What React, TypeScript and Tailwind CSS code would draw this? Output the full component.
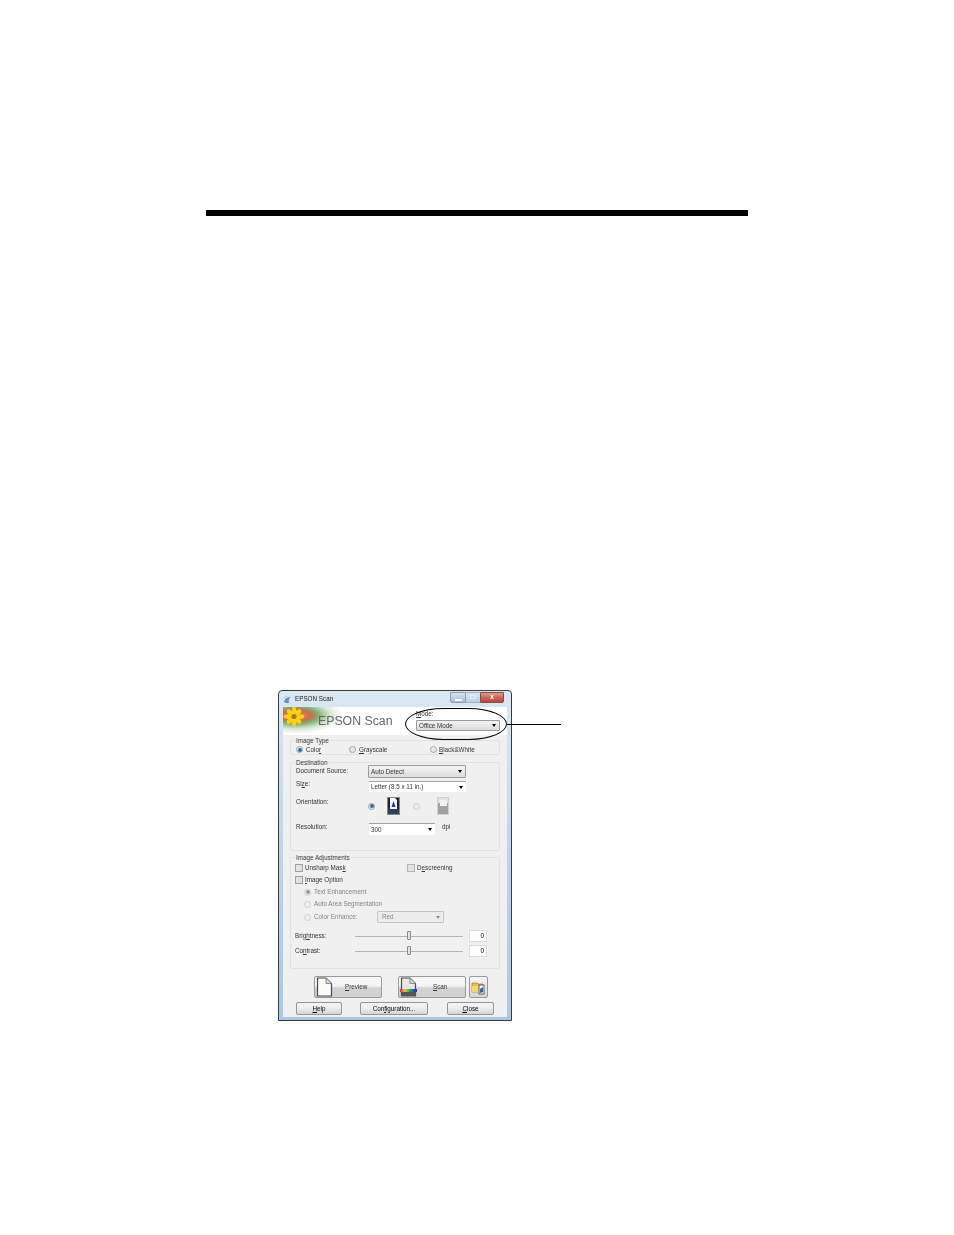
import type { ReactNode } from 'react';

function Radio({ on, off }: { on?: boolean; off?: boolean }) {
  return (
    <span className={`flex h-[7px] w-[7px] shrink-0 items-center justify-center rounded-full border ${off ? 'border-[#cfcfcf] bg-[#eeeeee]' : 'border-[#a0a4aa] bg-[#e8e8e8]'}`}>
      {on && <span className={`h-[4px] w-[4px] rounded-full ${off ? 'bg-[#9a9a9a]' : 'bg-[#2f6f9f]'}`} />}
    </span>
  );
}

function Check({ off }: { off?: boolean }) {
  return <span className={`h-[8px] w-[8px] shrink-0 border bg-[#e2e2e2] ${off ? 'border-[#b4b4b4]' : 'border-[#a0a0a0]'}`} />;
}

function Caret({ light }: { light?: boolean }) {
  return <span className={`h-0 w-0 border-x-[2.5px] border-t-[3px] border-x-transparent ${light ? 'border-t-[#8a8a8a]' : 'border-t-black'}`} />;
}

function Dropdown({ text, className, plain, off }: { text: string; className: string; plain?: boolean; off?: boolean }) {
  return (
    <div className={`flex shrink-0 items-center justify-between pl-[2px] pr-[3px] ${plain ? 'border-t border-t-[#a4a4a4] bg-white' : off ? 'rounded-[1px] border border-[#c4c4c4] bg-[#ececec] text-[#8a8a8a]' : 'rounded-[1px] border border-[#9a9a9a] bg-gradient-to-b from-[#f4f4f4] to-[#dcdcdc]'} ${className}`}>
      <span>{text}</span>
      <Caret light={off} />
    </div>
  );
}

function Group({ title, className, children }: { title: string; className: string; children?: ReactNode }) {
  return (
    <div className={`relative ml-[7px] w-[210px] rounded-[2px] border border-[#e0e2e4] ${className}`}>
      <span className="absolute -top-[4px] left-[4px] bg-[#f0f0f0] px-[1px] leading-[8px] text-[#3a3a3a]">{title}</span>
      {children}
    </div>
  );
}

function Slider({ label }: { label: ReactNode }) {
  return (
    <div className="flex h-[12px] items-center pl-[4px]">
      <span className="w-[60px] shrink-0">{label}</span>
      <div className="relative flex h-[12px] w-[108px] items-center">
        <div className="h-px w-full bg-[#b4b4b4]" />
        <div className="absolute left-[52px] top-[1px] h-[9px] w-[4px] rounded-[1px] border border-[#888] bg-[#e4e4e4]" />
      </div>
      <div className="ml-[6px] flex h-[12px] w-[18px] items-center justify-end border border-[#dcdcdc] bg-white pr-[2px] text-black">0</div>
    </div>
  );
}

function PageIcon({ rainbow }: { rainbow?: boolean }) {
  return (
    <svg width="17" height="20" viewBox="0 0 17 20" className="shrink-0">
      <defs>
        <linearGradient id="rb" x1="0" x2="1" y1="0" y2="0">
          <stop offset="0" stopColor="#e01890" />
          <stop offset="0.3" stopColor="#e8d020" />
          <stop offset="0.55" stopColor="#30b040" />
          <stop offset="0.8" stopColor="#2050c8" />
          <stop offset="1" stopColor="#602090" />
        </linearGradient>
      </defs>
      <path d="M1.5 1 H10 L15.5 6.5 V19 H1.5 Z" fill={rainbow ? '#e6e6e6' : '#fbfbf8'} stroke="#4a4a4a" strokeWidth="1.2" />
      <path d="M10 1 V6.5 H15.5" fill="#d8d8d8" stroke="#777" strokeWidth="0.8" />
      {rainbow && <rect x="0" y="12" width="17" height="3" fill="url(#rb)" />}
      {rainbow && <rect x="1.5" y="15" width="14" height="4" fill="#555" />}
    </svg>
  );
}

function BigButton({ children, w }: { children: ReactNode; w: string }) {
  return (
    <div className={`flex h-[22px] items-center rounded-[2px] border border-[#9a9a9a] bg-gradient-to-b from-[#f6f6f6] from-45% to-[#d2d2d2] to-55% pl-[1px] ${w}`}>
      {children}
    </div>
  );
}

function SmallButton({ children, w }: { children: ReactNode; w: string }) {
  return (
    <div className={`flex h-[13px] items-center justify-center rounded-[2px] border border-[#949494] bg-gradient-to-b from-[#f6f6f6] via-[#ececec] to-[#d6d6d6] text-black ${w}`}>
      {children}
    </div>
  );
}

export default function App() {
  return (
    <div className="min-h-[1235px] bg-white pt-[210px] font-['Liberation_Sans',sans-serif]">
      <div className="ml-[206px] h-[6px] w-[542px] bg-black" />

      <div className="relative ml-[278px] mt-[474px] w-[234px]">
        <div className="h-[331px] w-[234px] rounded-t-[4px] border border-[#3a3a3a] bg-gradient-to-b from-[#dbe8f4] via-[#bcd4ec] to-[#a9c8e8] px-[4px] pb-[4px] text-[6.3px] leading-[8px] text-[#333] blur-[0.35px]">
          {/* title bar */}
          <div className="flex h-[16px] items-center">
            <svg width="9" height="9" viewBox="0 0 9 9" className="shrink-0">
              <path d="M1 7 C2 3 5 2 8 2 C6 3 5 5 6 8 C4 8 2 8 1 7 Z" fill="#5d8fc4" />
              <path d="M1 3 C2 2 3 1 4 1" stroke="#9fb9d4" fill="none" />
            </svg>
            <span className="ml-[3px] text-[#222]">EPSON Scan</span>
            <div className="ml-auto mr-[3px] flex h-[11px] -translate-y-[2px]">
              <div className="flex w-[16px] items-end justify-center rounded-bl-[2px] border border-[#8d9cae] bg-gradient-to-b from-[#d8e4f0] to-[#a8bcd2] pb-[1px]">
                <span className="h-[2px] w-[7px] bg-white" />
              </div>
              <div className="flex w-[14px] items-center justify-center border-y border-[#a0b0c2] bg-gradient-to-b from-[#dae6f2] to-[#bccfe2]">
                <span className="h-[4px] w-[6px] border border-[#e8eef5]" />
              </div>
              <div className="flex w-[24px] items-center justify-center rounded-br-[2px] border border-[#8a4a42] bg-gradient-to-b from-[#dba094] via-[#c7665a] to-[#b84a3e] text-[7px] font-bold text-white">
                x
              </div>
            </div>
          </div>

          {/* client area */}
          <div className="h-[310px] w-[224px] bg-[#f0f0f0]">
            {/* banner */}
            <div className="flex h-[28px] items-start bg-white">
              <svg width="72" height="28" viewBox="0 0 72 28" className="shrink-0">
                <defs>
                  <radialGradient id="halo" cx="0.18" cy="0.3" r="0.8">
                    <stop offset="0" stopColor="#c8a030" />
                    <stop offset="0.26" stopColor="#cf6a52" />
                    <stop offset="0.38" stopColor="#7fb070" />
                    <stop offset="0.6" stopColor="#dbe7d6" />
                    <stop offset="0.82" stopColor="#ffffff" />
                  </radialGradient>
                </defs>
                <rect width="72" height="28" fill="url(#halo)" />
                <g fill="#f6d21a">
                  <ellipse cx="11" cy="4" rx="2.3" ry="4.4" />
                  <ellipse cx="11" cy="15" rx="2.3" ry="4.4" />
                  <ellipse cx="5" cy="9.5" rx="4.4" ry="2.3" />
                  <ellipse cx="17" cy="9.5" rx="4.4" ry="2.3" />
                  <ellipse cx="7" cy="5.5" rx="2.3" ry="4" transform="rotate(-45 7 5.5)" />
                  <ellipse cx="15" cy="5.5" rx="2.3" ry="4" transform="rotate(45 15 5.5)" />
                  <ellipse cx="7" cy="13.5" rx="2.3" ry="4" transform="rotate(45 7 13.5)" />
                  <ellipse cx="15" cy="13.5" rx="2.3" ry="4" transform="rotate(-45 15 13.5)" />
                </g>
                <circle cx="11" cy="9.5" r="2.6" fill="#b8741c" />
              </svg>
              <span className="mt-[7px] -ml-[37px] text-[12.3px] leading-[14px] text-[#666]">EPSON Scan</span>
              <div className="ml-auto mr-[7px] mt-[3px] w-[84px]">
                <div className="h-[10px] leading-[8px]"><u>M</u>ode:</div>
                <Dropdown text="Office Mode" className="h-[11px] w-[84px]" />
              </div>
            </div>

            <Group title="Image Type" className="mt-[5px] h-[15px]">
              <div className="flex h-[14px] items-center pl-[5px] pt-[3px]">
                <div className="flex w-[53px] items-center gap-[3px]"><Radio on /><span>Colo<u>r</u></span></div>
                <div className="flex w-[81px] items-center gap-[3px]"><Radio /><span><u>G</u>rayscale</span></div>
                <div className="flex items-center gap-[2px]"><Radio /><span><u>B</u>lack&amp;White</span></div>
              </div>
            </Group>

            <Group title="Destination" className="mt-[7px] h-[89px]">
              <div className="flex pl-[5px] pt-[2px]">
                <div className="flex h-[13px] items-center">
                  <span className="w-[72px] pb-[2px]">Document Source:</span>
                  <Dropdown text="Auto Detect" className="h-[13px] w-[98px]" />
                </div>
              </div>
              <div className="mt-[3px] flex h-[11px] items-center pl-[5px]">
                <span className="w-[73px] pb-[5px]">Si<u>z</u>e:</span>
                <Dropdown text="Letter (8.5 x 11 in.)" className="h-[11px] w-[97px]" plain />
              </div>
              <div className="mt-[5px] flex h-[18px] items-center pl-[5px]">
                <span className="w-[72px] pb-[8px]">Orientation:</span>
                <Radio on />
                <svg width="13" height="18" viewBox="0 0 13 18" className="ml-[12px] shrink-0">
                  <rect width="13" height="18" fill="#16233a" />
                  <rect y="12" width="13" height="6" fill="#2b4060" />
                  <path d="M3 1 H8 L10 3 V12 H3 Z" fill="#f4f6fb" />
                  <path d="M6.5 4 L8.5 10 H4.5 Z" fill="#2a2ad0" />
                  <rect x="0.5" y="0.5" width="12" height="17" fill="none" stroke="#8a8a78" />
                </svg>
                <span className="ml-[13px]"><Radio off /></span>
                <svg width="12" height="18" viewBox="0 0 12 18" className="ml-[17px] shrink-0">
                  <rect width="12" height="18" fill="#e4e4e4" stroke="#bdbdbd" />
                  <rect x="1" y="6" width="10" height="11" fill="#a2a2a2" />
                  <path d="M3 3 H8 L10 5 V9 H3 Z" fill="#f2f2f2" />
                </svg>
              </div>
              <div className="mt-[8px] flex h-[12px] items-center pl-[5px]">
                <span className="w-[73px] pb-[5px]">Resolution:</span>
                <Dropdown text="300" className="h-[12px] w-[66px]" plain />
                <span className="ml-[7px] pb-[4px]">dpi</span>
              </div>
            </Group>

            <Group title="Image Adjustments" className="mt-[6px] h-[112px]">
              <div className="mt-[5px] flex h-[10px] items-center pl-[4px]">
                <div className="flex w-[112px] items-center gap-[2px]"><Check /><span>Unsharp Mas<u>k</u></span></div>
                <div className="flex items-center gap-[2px]"><Check off /><span>D<u>e</u>screening</span></div>
              </div>
              <div className="mt-[2px] flex h-[10px] items-center gap-[2px] pl-[4px]">
                <Check /><span><u>I</u>mage Option</span>
              </div>
              <div className="pl-[13px] text-[#858585]">
                <div className="mt-[2px] flex h-[10px] items-center gap-[3px]"><Radio on off />Text Enhancement</div>
                <div className="mt-[2px] flex h-[10px] items-center gap-[3px]"><Radio off />Auto Area Segmentation</div>
                <div className="mt-[2px] flex h-[12px] items-center gap-[3px]">
                  <Radio off />
                  <span className="w-[60px]">Color Enhance:</span>
                  <Dropdown text="Red" className="h-[12px] w-[67px] pl-[4px]" off />
                </div>
              </div>
              <div className="mt-[7px]"><Slider label={<>Brig<u>h</u>tness:</>} /></div>
              <div className="mt-[3px]"><Slider label={<>Co<u>n</u>trast:</>} /></div>
            </Group>

            <div className="ml-[31px] mt-[7px] flex">
              <BigButton w="w-[68px]">
                <PageIcon />
                <span className="ml-[12px]"><u>P</u>review</span>
              </BigButton>
              <div className="ml-[16px]">
                <BigButton w="w-[68px]">
                  <PageIcon rainbow />
                  <span className="ml-[16px]"><u>S</u>can</span>
                </BigButton>
              </div>
              <div className="ml-[3px] flex h-[22px] w-[19px] items-center justify-center rounded-[2px] border border-[#9a9a9a] bg-gradient-to-b from-[#f6f6f6] to-[#d6d6d6]">
                <svg width="15" height="15" viewBox="0 0 15 15">
                  <path d="M1 3 H6 L7 4 H12 V12 H1 Z" fill="#e8c040" stroke="#a08020" strokeWidth="0.7" />
                  <path d="M1 6 H13 L11.5 12 H1 Z" fill="#f2d870" />
                  <rect x="8" y="5" width="5" height="9" fill="#f4f4f4" stroke="#444" strokeWidth="0.8" />
                  <path d="M9 9 L12 7 V12 L9 13 Z" fill="#3a5fae" />
                </svg>
              </div>
            </div>

            <div className="ml-[13px] mt-[4px] flex">
              <SmallButton w="w-[46px]"><u>H</u>elp</SmallButton>
              <div className="ml-[18px]"><SmallButton w="w-[68px]">Con<u>f</u>iguration...</SmallButton></div>
              <div className="ml-[19px]"><SmallButton w="w-[47px]"><u>C</u>lose</SmallButton></div>
            </div>
          </div>
        </div>

        {/* callout drawn over the window */}
        <div className="absolute left-[127px] top-[18px] h-[32px] w-[102px] rounded-[38px/16px] border border-black" />
        <div className="absolute left-[229px] top-[34px] h-px w-[54px] bg-black" />
      </div>
    </div>
  );
}
